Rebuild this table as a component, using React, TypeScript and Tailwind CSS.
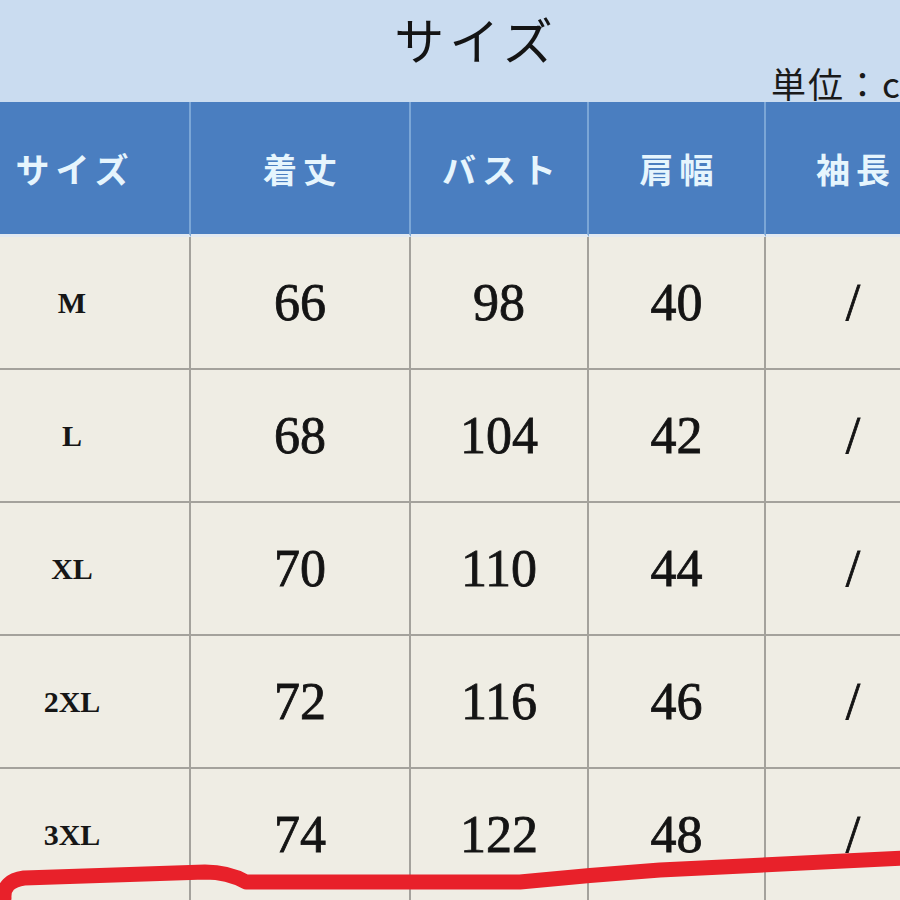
const headers = ["サイズ", "着丈", "バスト", "肩幅", "袖長"];

const rows = [
  ["M", "66", "98", "40", "/"],
  ["L", "68", "104", "42", "/"],
  ["XL", "70", "110", "44", "/"],
  ["2XL", "72", "116", "46", "/"],
  ["3XL", "74", "122", "48", "/"],
];

const jp = { fontFamily: '"Noto Sans CJK JP", "Noto Sans", sans-serif' };
const serif = { fontFamily: '"Liberation Serif", "DejaVu Serif", serif' };

export default function App() {
  return (
    <div className="relative w-[900px] h-[900px] overflow-hidden bg-[#efede4]">
      {/* title band */}
      <div className="h-[102px] bg-[#cadcf0] flex flex-col">
        <div className="flex justify-center pl-[52px] pt-[6px]">
          <span style={jp} className="text-[50px] leading-[64px] tracking-[5px] text-[#141414]">
            サイズ
          </span>
        </div>
        <div className="pl-[771px] -mt-[6px] whitespace-nowrap">
          <span style={jp} className="text-[35px] leading-[38px] tracking-[2px] text-[#1a1a1a]">
            単位：c
          </span>
        </div>
      </div>

      {/* table */}
      <div className="-ml-[45px] w-[985px] grid grid-cols-[236px_220px_178px_177px_174px]">
        {headers.map((h, i) => (
          <div
            key={h}
            className={`h-[135px] bg-[#4a7ec0] border-b-[3px] border-b-[#e2e9f1] flex items-center justify-center ${
              i < 4 ? "border-r-2 border-r-[#7ba6d6]" : ""
            }`}
          >
            <span style={jp} className="text-[34px] font-bold tracking-[6px] text-[#e6f5fd] pl-[6px]">
              {h}
            </span>
          </div>
        ))}
        {rows.map((r, ri) =>
          r.map((c, ci) => (
            <div
              key={ri + "-" + ci}
              className={`h-[133px] border-b-2 border-b-[#a4a29c] flex items-center justify-center ${
                ci < 4 ? "border-r-2 border-r-[#a4a29c]" : ""
              }`}
            >
              {ci === 0 ? (
                <span style={serif} className="text-[30px] font-bold text-[#161616]">
                  {c}
                </span>
              ) : (
                <span
                  style={serif}
                  className="text-[52px] text-[#141414] [-webkit-text-stroke:0.8px_#141414]"
                >
                  {c}
                </span>
              )}
            </div>
          ))
        )}
      </div>

      {/* red marker stroke */}
      <svg className="absolute inset-0 pointer-events-none" width="900" height="900" viewBox="0 0 900 900">
        <path
          d="M 4 898 Q 3 881 24 878 L 205 872 Q 228 872 246 882 L 520 882 Q 590 875 660 870 L 905 858"
          fill="none"
          stroke="#e8212a"
          strokeWidth="15"
          strokeLinecap="round"
          strokeLinejoin="round"
        />
      </svg>
    </div>
  );
}
